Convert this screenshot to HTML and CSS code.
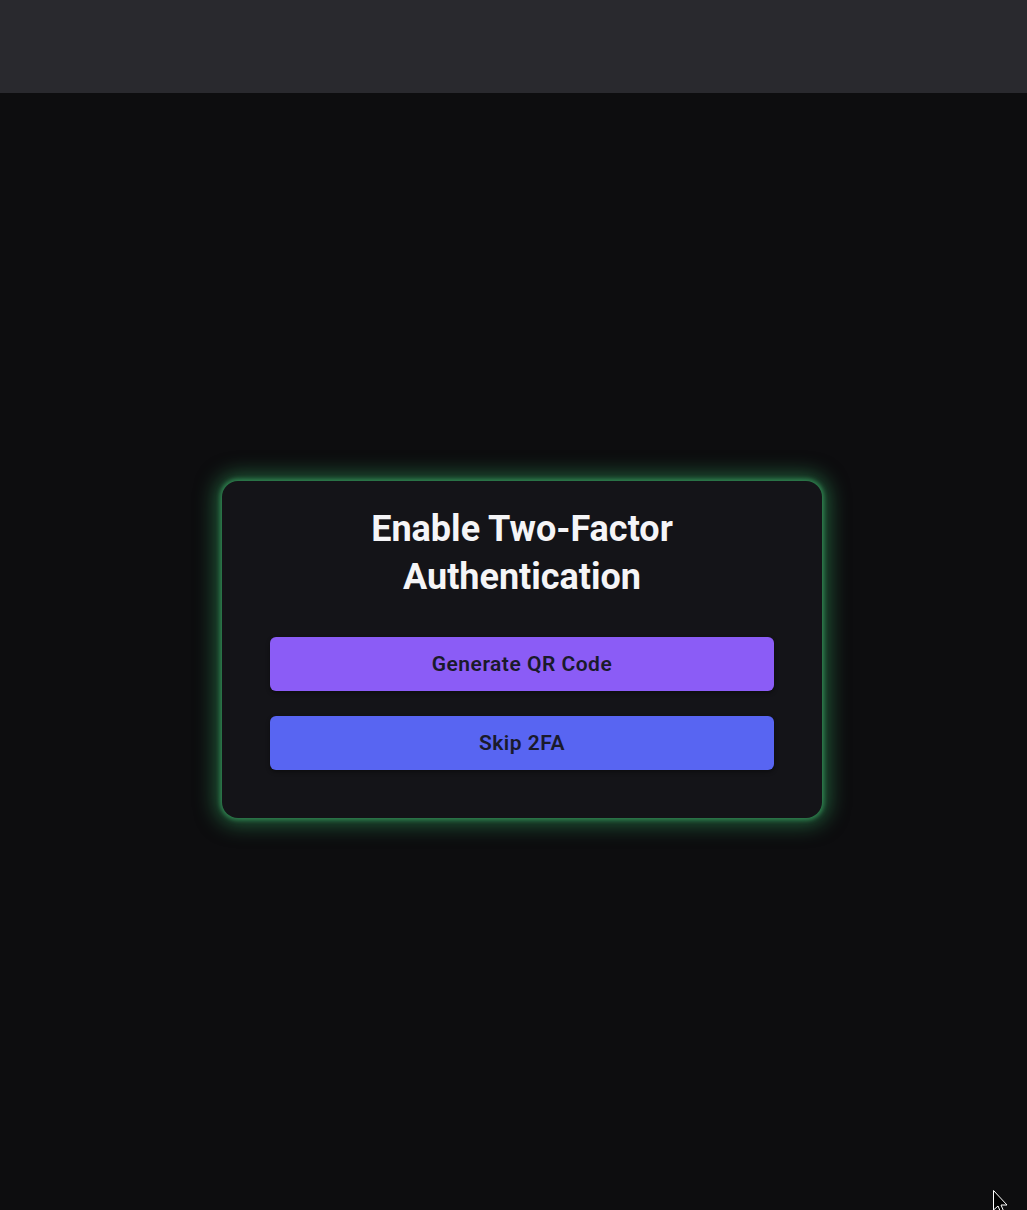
FILE: index.html
```html
<!DOCTYPE html>
<html lang="en">
<head>
<meta charset="utf-8">
<title>Enable Two-Factor Authentication</title>
<link rel="stylesheet" href="styles.css">
</head>
<body>
<header class="topbar"></header>
<main class="stage">
  <section class="card">
    <h1 class="title">Enable Two-Factor Authentication</h1>
    <div class="actions">
      <button class="btn btn-qr">Generate QR Code</button>
      <button class="btn btn-skip">Skip 2FA</button>
    </div>
  </section>
</main>
<svg class="cursor" width="20" height="24" viewBox="0 0 20 24"><path d="M0.5 0.5 L0.5 20 L5 16 L8 23 L11 22 L8 15 L14 15 Z" fill="#000" stroke="#fff" stroke-width="1"/></svg>
</body>
</html>
```
FILE: styles.css
```css
* { box-sizing: border-box; }
html, body { margin: 0; padding: 0; }
body {
  background: #0d0d0f;
  font-family: Roboto, "Noto Sans", Arial, sans-serif;
  min-height: 1210px;
  display: flex;
  flex-direction: column;
  overflow: hidden;
}
.topbar {
  height: 93px;
  background: #29292e;
  flex: none;
}
.stage {
  flex: 1;
  display: flex;
  justify-content: center;
  padding-top: 388px;
  padding-left: 17px;
  align-items: flex-start;
}
.card {
  width: 600px;
  background: #141418;
  border-radius: 16px;
  padding: 24px 48px 48px;
  box-shadow: 0 0 4px 2px rgba(50, 140, 85, 0.85), 0 0 20px 7px rgba(52, 168, 98, 0.5);
}
.title {
  margin: 0 auto 36px;
  max-width: 400px;
  text-align: center;
  color: #f5f5f7;
  font-size: 36px;
  line-height: 48px;
  font-weight: 700;
}
.actions {
  display: flex;
  flex-direction: column;
  gap: 25px;
}
.btn {
  height: 54px;
  border: none;
  border-radius: 6px;
  font-family: Roboto, "Noto Sans", Arial, sans-serif;
  font-size: 21px;
  font-weight: 600;
  color: #1a1a2b;
  letter-spacing: 0.5px;
  box-shadow: 0 2px 4px rgba(0,0,0,0.4);
  cursor: pointer;
}
.btn-qr { background: #8b5cf6; }
.btn-skip { background: #5865f2; }
.cursor {
  position: absolute;
  left: 993px;
  top: 1190px;
}
```
